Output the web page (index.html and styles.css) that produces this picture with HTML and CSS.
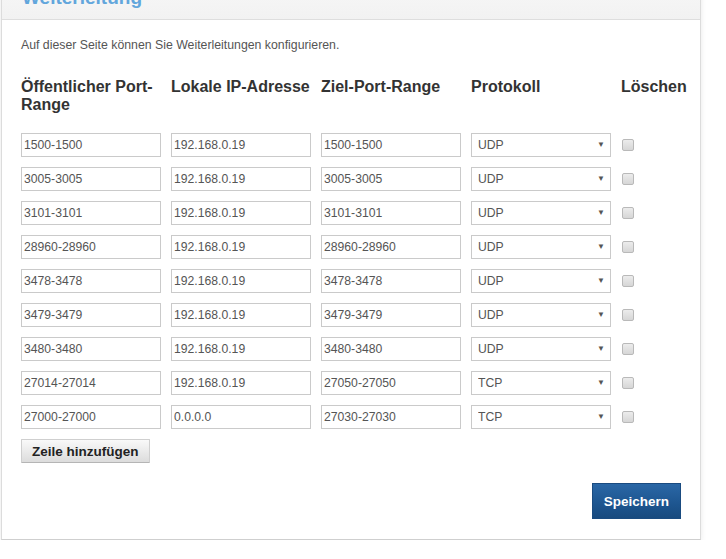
FILE: index.html
```html
<!DOCTYPE html>
<html lang="de">
<head>
    <meta charset="UTF-8">
    <meta name="viewport" content="width=device-width, initial-scale=1.0">
    <title>Weiterleitung</title>
    <link rel="stylesheet" href="styles.css">
</head>
<body>
    <div class="panel">
        <div class="panel-head">
            <h2>Weiterleitung</h2>
        </div>
        <div class="panel-body">
            <p class="intro">Auf dieser Seite können Sie Weiterleitungen konfigurieren.</p>

            <div class="fwd-grid">
                <div class="col-title">Öffentlicher Port-Range</div>
                <div class="col-title">Lokale IP-Adresse</div>
                <div class="col-title">Ziel-Port-Range</div>
                <div class="col-title">Protokoll</div>
                <div class="col-title">Löschen</div>

                <input class="field" type="text" value="1500-1500">
                <input class="field" type="text" value="192.168.0.19">
                <input class="field" type="text" value="1500-1500">
                <div class="select-wrap"><select class="field"><option selected>UDP</option><option>TCP</option></select></div>
                <div class="check-cell"><input type="checkbox" class="del"></div>

                <input class="field" type="text" value="3005-3005">
                <input class="field" type="text" value="192.168.0.19">
                <input class="field" type="text" value="3005-3005">
                <div class="select-wrap"><select class="field"><option selected>UDP</option><option>TCP</option></select></div>
                <div class="check-cell"><input type="checkbox" class="del"></div>

                <input class="field" type="text" value="3101-3101">
                <input class="field" type="text" value="192.168.0.19">
                <input class="field" type="text" value="3101-3101">
                <div class="select-wrap"><select class="field"><option selected>UDP</option><option>TCP</option></select></div>
                <div class="check-cell"><input type="checkbox" class="del"></div>

                <input class="field" type="text" value="28960-28960">
                <input class="field" type="text" value="192.168.0.19">
                <input class="field" type="text" value="28960-28960">
                <div class="select-wrap"><select class="field"><option selected>UDP</option><option>TCP</option></select></div>
                <div class="check-cell"><input type="checkbox" class="del"></div>

                <input class="field" type="text" value="3478-3478">
                <input class="field" type="text" value="192.168.0.19">
                <input class="field" type="text" value="3478-3478">
                <div class="select-wrap"><select class="field"><option selected>UDP</option><option>TCP</option></select></div>
                <div class="check-cell"><input type="checkbox" class="del"></div>

                <input class="field" type="text" value="3479-3479">
                <input class="field" type="text" value="192.168.0.19">
                <input class="field" type="text" value="3479-3479">
                <div class="select-wrap"><select class="field"><option selected>UDP</option><option>TCP</option></select></div>
                <div class="check-cell"><input type="checkbox" class="del"></div>

                <input class="field" type="text" value="3480-3480">
                <input class="field" type="text" value="192.168.0.19">
                <input class="field" type="text" value="3480-3480">
                <div class="select-wrap"><select class="field"><option selected>UDP</option><option>TCP</option></select></div>
                <div class="check-cell"><input type="checkbox" class="del"></div>

                <input class="field" type="text" value="27014-27014">
                <input class="field" type="text" value="192.168.0.19">
                <input class="field" type="text" value="27050-27050">
                <div class="select-wrap"><select class="field"><option>UDP</option><option selected>TCP</option></select></div>
                <div class="check-cell"><input type="checkbox" class="del"></div>

                <input class="field" type="text" value="27000-27000">
                <input class="field" type="text" value="0.0.0.0">
                <input class="field" type="text" value="27030-27030">
                <div class="select-wrap"><select class="field"><option>UDP</option><option selected>TCP</option></select></div>
                <div class="check-cell"><input type="checkbox" class="del"></div>
            </div>

            <button class="btn-add" type="button">Zeile hinzufügen</button>

            <div class="actions">
                <button class="btn-save" type="button">Speichern</button>
            </div>
        </div>
    </div>
</body>
</html>
```

FILE: styles.css
```css
body {
    margin: 0;
    background: #fff;
    font-family: "Liberation Sans", Arial, sans-serif;
    color: #333;
}

.panel {
    margin: -24px 25px 0 1px;
    border: 1px solid #dcdcdc;
    border-bottom-color: #cfcfcf;
    background: #fff;
    box-shadow: 0 5px 8px -3px rgba(0, 0, 0, 0.2);
}

.panel-head {
    padding: 10px 20px 10px 20px;
    background: linear-gradient(#f8f8f8, #f2f2f2);
    border-bottom: 1px solid #dedede;
}

.panel-head h2 {
    margin: 0;
    font-size: 19px;
    line-height: 22px;
    font-weight: bold;
    color: #62a6dc;
}

.panel-body {
    padding: 19px 19px 20px 19px;
}

.intro {
    margin: 0;
    font-size: 12.3px;
    line-height: 13px;
    color: #555;
}

.fwd-grid {
    display: grid;
    grid-template-columns: repeat(4, 150px) 1fr;
    row-gap: 10px;
    margin-top: 26px;
}

.col-title {
    font-size: 16px;
    line-height: 18px;
    font-weight: bold;
    color: #333;
    padding-bottom: 9px;
}

.field {
    box-sizing: border-box;
    width: 140px;
    height: 24px;
    margin: 0;
    padding: 0 2px;
    border: 1px solid #cacaca;
    border-radius: 0;
    background: #fff;
    font-family: "Liberation Sans", Arial, sans-serif;
    font-size: 12.2px;
    color: #555;
    outline: none;
}

.select-wrap {
    position: relative;
    width: 140px;
}

.select-wrap select {
    appearance: none;
    -webkit-appearance: none;
    padding-left: 6px;
}

/* little arrow on the right of the protocol dropdown */
.select-wrap::after {
    content: "\25BC";
    position: absolute;
    right: 6px;
    top: 7px;
    font-size: 8px;
    line-height: 10px;
    color: #555;
    pointer-events: none;
}

.check-cell {
    display: flex;
    align-items: center;
}

.del {
    appearance: none;
    -webkit-appearance: none;
    box-sizing: border-box;
    width: 12px;
    height: 12px;
    margin: 0 0 0 1px;
    border: 1px solid #b9b9b9;
    border-radius: 2px;
    background: linear-gradient(#ececec, #d6d6d6);
}

.btn-add {
    display: block;
    box-sizing: border-box;
    height: 24px;
    margin-top: 10px;
    padding: 0 10px;
    border: 1px solid #cfcfcf;
    border-bottom-color: #b5b5b5;
    border-radius: 1px;
    background: linear-gradient(#f9f9f9, #dcdcdc);
    font-family: "Liberation Sans", Arial, sans-serif;
    font-size: 13.5px;
    font-weight: bold;
    color: #222;
}

.actions {
    display: flex;
    justify-content: flex-end;
    margin-top: 20px;
}

.btn-save {
    box-sizing: border-box;
    height: 36px;
    padding: 0 11px;
    border: 1px solid #1a4b80;
    background: linear-gradient(#2a67a6, #1d558f 60%, #184a7e);
    font-family: "Liberation Sans", Arial, sans-serif;
    font-size: 13.5px;
    font-weight: bold;
    color: #fff;
}
```
